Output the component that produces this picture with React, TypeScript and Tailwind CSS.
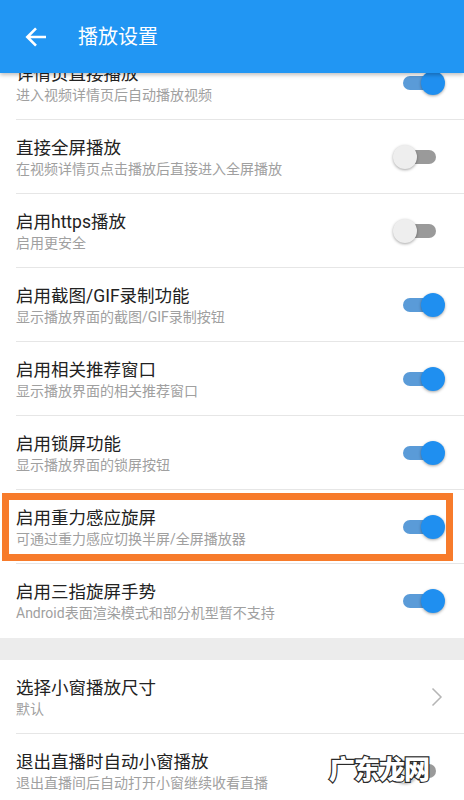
import type { ReactNode } from "react";

type Item = {
  title: string;
  desc: string;
  on?: boolean;
  arrow?: boolean;
  last?: boolean;
  marked?: boolean;
};

const TOP: Item[] = [
  { title: "直接全屏播放", desc: "在视频详情页点击播放后直接进入全屏播放", on: false },
  { title: "启用https播放", desc: "启用更安全", on: false },
  { title: "启用截图/GIF录制功能", desc: "显示播放界面的截图/GIF录制按钮", on: true },
  { title: "启用相关推荐窗口", desc: "显示播放界面的相关推荐窗口", on: true },
  { title: "启用锁屏功能", desc: "显示播放界面的锁屏按钮", on: true },
  { title: "启用重力感应旋屏", desc: "可通过重力感应切换半屏/全屏播放器", on: true, marked: true },
  { title: "启用三指旋屏手势", desc: "Android表面渲染模式和部分机型暂不支持", on: true, last: true },
];

const Toggle = ({ on }: { on: boolean }) => (
  <div className="relative h-[24px] w-[52px] shrink-0">
    <div
      className={
        on
          ? "absolute left-[10px] top-[5px] h-[14px] w-[33px] rounded-full bg-[#5a9bd8]"
          : "absolute left-[10px] top-[5px] h-[14px] w-[33px] rounded-full bg-[#9a9a9a]"
      }
    />
    <div
      className={
        on
          ? "absolute left-[28px] top-0 h-[24px] w-[24px] rounded-full bg-[#1f8ff0] shadow-[0_1px_3px_rgba(0,0,0,0.35)]"
          : "absolute left-0 top-0 h-[24px] w-[24px] rounded-full bg-[#eeeeee] shadow-[0_1px_3px_rgba(0,0,0,0.35)]"
      }
    />
  </div>
);

const Chevron = () => (
  <svg width="12" height="20" viewBox="0 0 12 20" className="mr-[2px] shrink-0">
    <path d="M1.5 1.5 L10 10 L1.5 18.5" fill="none" stroke="#b5b5b5" strokeWidth="1.5" />
  </svg>
);

const Row = ({ item, children }: { item: Item; children?: ReactNode }) => (
  <div className="relative h-[74px] shrink-0 bg-white pl-4">
    <div
      className={
        item.last
          ? "flex h-full items-center pr-[19px]"
          : "flex h-full items-center border-b border-[#e6e6e6] pr-[19px]"
      }
    >
      <div className="flex-1 pt-[2px]">
        <div className="text-[17.5px] leading-[22px] text-[#222222]">{item.title}</div>
        <div className="text-[14px] leading-[20px] text-[#a0a0a0]">{item.desc}</div>
      </div>
      {item.arrow ? <Chevron /> : <Toggle on={!!item.on} />}
    </div>
    {item.marked && (
      <div className="pointer-events-none absolute left-[2px] top-[3px] h-[68px] w-[451px] border-[7px] border-[#f77b2b]" />
    )}
    {children}
  </div>
);

export default function App() {
  return (
    <div className="relative flex h-[800px] w-[464px] flex-col overflow-hidden bg-white font-['Roboto','Noto_Sans_CJK_SC',sans-serif]">
      <header className="relative z-10 flex h-[73px] shrink-0 items-center bg-[#2196f3] shadow-[0_2px_4px_rgba(0,0,0,0.25)]">
        <svg width="22" height="20" viewBox="0 0 22 20" className="ml-[25px]">
          <path d="M21 10 H2.5 M11 1.3 L2.3 10 L11 18.7" fill="none" stroke="#ffffff" strokeWidth="2.6" />
        </svg>
        <h1 className="ml-[31px] text-[20px] font-normal text-white">播放设置</h1>
      </header>

      {/* first row is scrolled partly under the app bar */}
      <div className="flex h-[47px] shrink-0 flex-col justify-end overflow-hidden">
        <Row item={{ title: "详情页直接播放", desc: "进入视频详情页后自动播放视频", on: true }} />
      </div>

      {TOP.map((item) => (
        <Row key={item.title} item={item} />
      ))}

      <div className="h-[22px] shrink-0 bg-[#ececec]" />

      <Row item={{ title: "选择小窗播放尺寸", desc: "默认", arrow: true }} />
      <Row item={{ title: "退出直播时自动小窗播放", desc: "退出直播间后自动打开小窗继续收看直播", on: false }}>
        <div className="pointer-events-none absolute left-[329px] top-[23px] text-[26px] font-black leading-none tracking-[-1px] text-white [-webkit-text-stroke:2.4px_#2a2a2a] [paint-order:stroke_fill]">
          广东龙网
        </div>
      </Row>
    </div>
  );
}
